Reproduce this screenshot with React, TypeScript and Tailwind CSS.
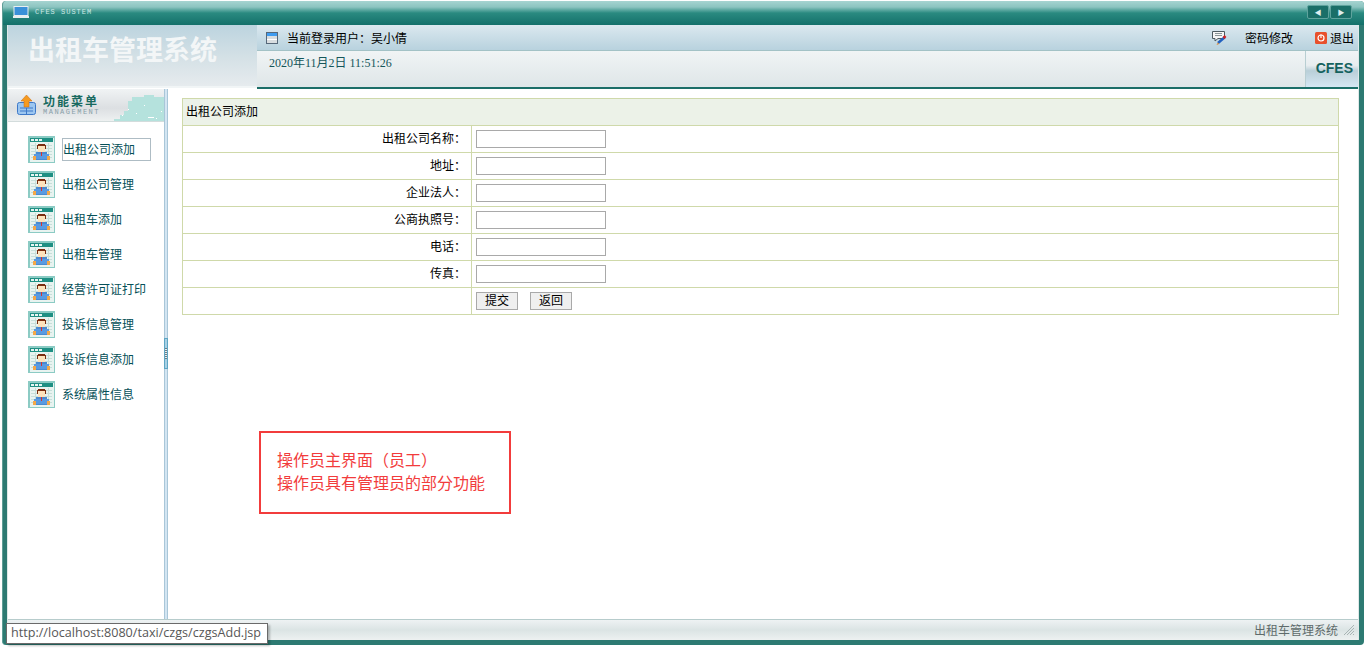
const cjk = "font-['SimSun','Noto_Sans_CJK_SC','Liberation_Sans',sans-serif]";

function PersonIcon() {
  return (
    <svg width="27" height="27" viewBox="0 0 27 27" className="shrink-0" shapeRendering="crispEdges">
      <rect x="0.750" y="0.750" width="25.500" height="25.500" fill="#e8f3f0" stroke="#8ccbc4" strokeWidth="1.500" />
      <rect x="2" y="2" width="23" height="4" fill="#1e8f83" />
      <rect x="3" y="3" width="3" height="2" fill="#e6f5f2" />
      <rect x="7" y="3" width="3" height="2" fill="#e6f5f2" />
      <rect x="11" y="3" width="3" height="2" fill="#e6f5f2" />
      <path d="M3 9.500H24M3 12.500H24M3 15.500H24M3 18.500H24M3 21.500H24M7.500 7V24M20.500 7V24" stroke="#c6dfd9" strokeWidth="1" />
      <rect x="8" y="16" width="11" height="8" fill="#4a8ad0" />
      <rect x="6" y="18" width="15" height="5" fill="#5a9ae0" />
      <rect x="5" y="20" width="3" height="4" fill="#f4a848" />
      <rect x="19" y="20" width="3" height="4" fill="#f4a848" />
      <rect x="10" y="8" width="7" height="8" fill="#fde3bc" />
      <rect x="10" y="8" width="7" height="2" fill="#7a2d10" />
      <rect x="9" y="9" width="1" height="4" fill="#7a2d10" />
      <rect x="17" y="9" width="1" height="4" fill="#7a2d10" />
      <rect x="13" y="16" width="1" height="4" fill="#d83030" />
    </svg>
  );
}

const menu = ["出租公司添加", "出租公司管理", "出租车添加", "出租车管理", "经营许可证打印", "投诉信息管理", "投诉信息添加", "系统属性信息"];
const fields = ["出租公司名称:", "地址:", "企业法人:", "公商执照号:", "电话:", "传真:"];

function Header() {
  return (
    <div className="flex h-[64px] shrink-0">
      <div className="flex h-[63px] w-[249px] shrink-0 items-center border-b-[2px] border-[#f1f5f6] bg-[linear-gradient(180deg,#bcd4df_0%,#d5e1e6_55%,#e6ebee_100%)] pl-[20px] pb-[14px]">
        <span className="text-[27px] font-bold leading-none text-[#f3f6f7]">出租车管理系统</span>
      </div>
      <div className="flex min-w-0 flex-1 flex-col border-b-[2px] border-[#1c6e68]">
        <div className="flex h-[26px] shrink-0 items-center border-b border-[#a3c2c6] bg-[linear-gradient(180deg,#dbe8ef,#b8d2de)] text-[12px] text-black">
          <svg width="12" height="12" viewBox="0 0 12 12" className="ml-[9px]">
            <rect x="0.500" y="0.500" width="11" height="11" fill="#d8dde0" stroke="#56687a" />
            <rect x="1" y="1" width="10" height="3" fill="#3f9cf0" />
            <rect x="1" y="7" width="10" height="1" fill="#fff" />
          </svg>
          <span className="ml-[9px]">{"当前登录用户\uFF1A吴小倩"}</span>
          <svg width="16" height="16" viewBox="0 0 16 16" className="ml-auto">
            <path d="M1.500 1.500H13.500V8.500H7L4 11V8.500H1.500Z" fill="#f5f5f5" stroke="#4c5a60" />
            <path d="M4 3.500H11M4 5.500H11" stroke="#8a9698" />
            <path d="M14 7L7 13" stroke="#2060c0" strokeWidth="2.500" />
            <path d="M14.500 6L12.500 8" stroke="#d02020" strokeWidth="2.500" />
            <path d="M7 12.500L5.500 15L8 14Z" fill="#e08020" />
          </svg>
          <span className="ml-[18px]">密码修改</span>
          <svg width="12" height="12" viewBox="0 0 12 12" className="ml-[22px]">
            <rect width="12" height="12" rx="1.500" fill="#e8502c" />
            <circle cx="6" cy="6" r="3" fill="none" stroke="#fff" strokeWidth="1.200" />
            <path d="M6 2.500V6" stroke="#fff" strokeWidth="1.200" />
          </svg>
          <span className="ml-[3px] mr-[4px]">退出</span>
        </div>
        <div className="flex min-h-0 flex-1 bg-[linear-gradient(180deg,#f0f4f5,#dfe6e8)]">
          <span className="ml-[12px] mt-[4px] font-['Liberation_Serif','Noto_Sans_CJK_SC',serif] text-[12px] leading-[16px] text-[#15565a]">2020年11月2日 11:51:26</span>
          <div className="ml-auto flex w-[53px] items-center justify-end border-l border-[#b8ced2] bg-[linear-gradient(180deg,#f0f4f6_0%,#e8edef_40%,#b9cfd8_55%,#d6e7f3_100%)] pb-[2px] pr-[5px]">
            <span className="font-['Liberation_Sans',sans-serif] text-[14px] font-bold text-[#14625e]">CFES</span>
          </div>
        </div>
      </div>
    </div>
  );
}

function Sidebar() {
  const dots: [number, number][] = [[8, 26], [14, 20], [22, 24], [30, 16], [36, 28], [42, 29], [47, 22]];
  return (
    <aside className="w-[156px] shrink-0 bg-white">
      <div className="relative flex h-[33px] items-center overflow-hidden border-b border-[#d3dcdc] bg-[linear-gradient(180deg,#f0f3f4,#dcdfe2_60%,#eef1f1)] pl-[9px]">
        <svg width="50" height="32" viewBox="0 0 50 32" shapeRendering="crispEdges" className="absolute right-0 top-0">
          <path d="M0 30H6V26H10V22H14V12H18V8H30V6H40V8H50V32H0Z" fill="#b5e2dd" />
          {dots.map(([x, y]) => (
            <rect key={`${x}-${y}`} x={x} y={y} width="1" height="1" fill="#ffffff" />
          ))}
          <rect x="34" y="28" width="6" height="1" fill="#ffffff" />
        </svg>
        <svg width="19" height="20" viewBox="0 0 19 20" className="relative">
          <rect x="0.500" y="7.500" width="18" height="12" rx="2" fill="#9cc6f0" stroke="#3d78c8" />
          <path d="M3 13H16M3 16H16M9.500 13V19" stroke="#3d78c8" />
          <path d="M9.500 0L15 6H12V12H7V6H4Z" fill="#f59a20" stroke="#c86a10" strokeWidth="0.500" />
        </svg>
        <div className="relative ml-[7px] flex flex-col">
          <span className="text-[12px] font-bold leading-[13px] tracking-[2px] text-[#17695f]">功能菜单</span>
          <span className="mt-[1px] font-['Liberation_Mono',monospace] text-[7px] leading-[8px] tracking-[1.500px] text-[#87a0a8]">MANAGEMENT</span>
        </div>
      </div>
      <ul className="flex flex-col gap-[8px] pl-[20px] pt-[14px]">
        {menu.map((m, i) => (
          <li key={m} className="flex h-[27px] items-center">
            <PersonIcon />
            <span className={`h-[23px] border text-[12px] leading-[19px] text-[#055058] ${i === 0 ? "ml-[7px] w-[89px] border-[#aebcc4]" : "ml-[6px] border-transparent"}`}>{m}</span>
          </li>
        ))}
      </ul>
    </aside>
  );
}

function Form() {
  return (
    <main className="min-w-0 flex-1 bg-white pl-[14px] pr-[19px] pt-[9px]">
      <div className="flex w-[1157px] flex-col border-l border-t border-r border-[#cfd9aa] text-[12px] text-black">
        <div className="flex h-[27px] items-center border-b border-[#cfd9aa] bg-[#ecf2e8] pb-[2px] pl-[3px]">出租公司添加</div>
        {fields.map((f) => (
          <div key={f} className="flex h-[27px] border-b border-[#cfd9aa]">
            <div className="flex w-[289px] items-center justify-end border-r border-[#cfd9aa] pb-[2px] pr-[5px]">{f.replace(":", "\uFF1A")}</div>
            <div className="flex items-center pl-[4px]">
              <div className="h-[18px] w-[130px] border border-[#a9a9a9] bg-white" />
            </div>
          </div>
        ))}
        <div className="flex h-[27px] border-b border-[#cfd9aa]">
          <div className="w-[289px] border-r border-[#cfd9aa]" />
          <div className="flex items-center gap-[12px] pl-[4px]">
            <button className="h-[18px] w-[42px] border border-[#a9a9a9] bg-[#efefef] pb-[2px] text-[12px] leading-none text-black">提交</button>
            <button className="h-[18px] w-[42px] border border-[#a9a9a9] bg-[#efefef] pb-[2px] text-[12px] leading-none text-black">返回</button>
          </div>
        </div>
      </div>
      <div className="ml-[77px] mt-[116px] flex h-[83px] w-[252px] flex-col justify-center border-[2px] border-[#f23c3c] pl-[16px] pb-[3px] text-[16px] leading-[23px] text-[#f23c3c]">
        <div>{"操作员主界面\uFF08员工\uFF09"}</div>
        <div>操作员具有管理员的部分功能</div>
      </div>
    </main>
  );
}

export default function App() {
  return (
    <div className={`relative h-[648px] w-[1366px] overflow-hidden bg-white pl-[2px] pt-[1px] ${cjk}`}>
      <div className="flex h-[644px] w-[1362px] flex-col overflow-hidden rounded-[4px] border-l border-[#5f9d96] bg-[#2d7a72]">
        <div className="flex h-[24px] shrink-0 items-center bg-[linear-gradient(180deg,#a6d4d1_0%,#8cc4c0_25%,#2a8a80_50%,#14706a_100%)] pb-[2px] pl-[10px] pr-[12px]">
          <svg width="16" height="12" viewBox="0 0 16 12">
            <rect x="1" y="0.500" width="14" height="9" fill="#3a90d8" stroke="#e8eef0" />
            <rect x="0" y="10" width="16" height="2" fill="#e8eef0" />
          </svg>
          <span className="ml-[6px] font-['Liberation_Mono',monospace] text-[7px] tracking-[1px] text-[#cfe9e6]">CFES SUSTEM</span>
          <div className="ml-auto flex gap-[1px]">
            <div className="flex h-[14px] w-[22px] items-center justify-center rounded-[2px] border border-[#5fa39d] bg-[#1a6f68] text-[7px] text-[#dfeeee]">◀</div>
            <div className="flex h-[14px] w-[22px] items-center justify-center rounded-[2px] border border-[#5fa39d] bg-[#1a6f68] text-[7px] text-[#dfeeee]">▶</div>
          </div>
        </div>
        <div className="ml-[4px] mb-[5px] mr-[5px] flex min-h-0 flex-1 flex-col border-l border-r border-[#dfe8e8] bg-white">
          <Header />
          <div className="flex min-h-0 flex-1">
            <Sidebar />
            <div className="relative w-[4px] shrink-0 border-x border-[#a9c6d8] bg-[#d3e5f2]">
              <div className="absolute left-[-1px] top-[249px] flex h-[31px] w-[4px] items-center justify-center border border-[#5ea6c4] bg-[#a8d0e4]">
                <div className="h-[11px] w-[2px] bg-[repeating-linear-gradient(180deg,#6d7f88_0,#6d7f88_1px,#e6eef2_1px,#e6eef2_2px)]" />
              </div>
            </div>
            <Form />
          </div>
          <div className="flex h-[21px] shrink-0 items-center justify-end border-t border-[#b7cccc] bg-[linear-gradient(180deg,#eef2f3,#dbe4e4_50%,#edf1f1)] pr-[3px] text-[12px] text-[#5f6b6b]">
            <span>出租车管理系统</span>
            <svg width="12" height="12" viewBox="0 0 12 12" className="ml-[5px]">
              <path d="M11 1L1 11M11 4L4 11M11 7L7 11M11 10L10 11" stroke="#a8b4b4" />
            </svg>
          </div>
        </div>
      </div>
      <div className="absolute left-[6px] top-[623px] flex h-[21px] w-[262px] items-center border border-[#6a6a6a] bg-white pl-[4px] font-['Open_Sans',sans-serif] text-[12.600px] text-[#575757] shadow-[2px_2px_2px_rgba(0,0,0,0.25)]">
        http://localhost:8080/taxi/czgs/czgsAdd.jsp
      </div>
    </div>
  );
}
